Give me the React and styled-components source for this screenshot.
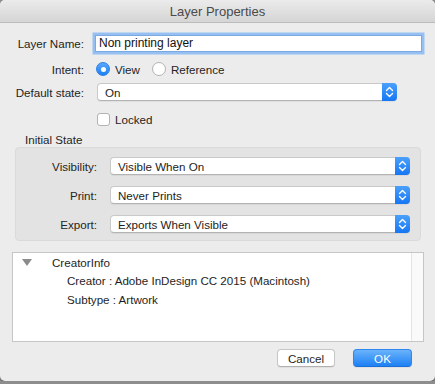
import React from 'react';
import styled, { createGlobalStyle } from 'styled-components';

const GlobalStyle = createGlobalStyle`
  html, body {
    margin: 0;
    padding: 0;
    background: #8d8d8d;
  }
  body {
    font-family: "Liberation Sans", Arial, sans-serif;
    color: #242424;
  }
`;

const Window = styled.div`
  width: 435px;
  height: 381px;
  background: #ececec;
  border-radius: 5px;
  box-shadow: 0 1px 2px rgba(0, 0, 0, 0.4);
  overflow: hidden;
  display: flex;
  flex-direction: column;
`;

const TitleBar = styled.div`
  height: 22px;
  flex: none;
  background: linear-gradient(#ebebeb, #d5d5d5);
  border-bottom: 1px solid #bcbcbc;
  display: flex;
  align-items: center;
  justify-content: center;
  font-size: 13px;
  color: #4a4a4a;
`;

const Body = styled.div`
  flex: 1;
  display: flex;
  flex-direction: column;
  font-size: 11.6px;
`;

const FieldRow = styled.div`
  display: grid;
  grid-template-columns: ${(p) => p.$label}px 1fr;
  column-gap: ${(p) => p.$gap}px;
  align-items: center;
  height: ${(p) => p.$h}px;
  margin-top: ${(p) => p.$mt}px;
`;

const Label = styled.div`
  text-align: right;
  white-space: nowrap;
`;

const TextInput = styled.input`
  box-sizing: border-box;
  width: 327px;
  height: 17px;
  margin-left: -1px;
  border: 1px solid #7ca9e0;
  box-shadow: 0 0 0 2.5px #95c0f1;
  background: #fff;
  padding: 0 3px;
  font: 12px "Liberation Sans", Arial, sans-serif;
  color: #111;
  outline: none;
`;

const RadioGroup = styled.div`
  display: flex;
  align-items: center;
  gap: 12px;
`;

const RadioOption = styled.label`
  display: flex;
  align-items: center;
  gap: 5px;
`;

const RadioDot = styled.span`
  box-sizing: border-box;
  width: 14px;
  height: 14px;
  border-radius: 50%;
  display: flex;
  align-items: center;
  justify-content: center;
  background: ${(p) => (p.$on ? 'linear-gradient(#5aa9fb, #1c7ff5)' : '#fff')};
  border: 1px solid ${(p) => (p.$on ? '#2a80e8' : '#b3b3b3')};
  &::after {
    content: '';
    display: ${(p) => (p.$on ? 'block' : 'none')};
    width: 5px;
    height: 5px;
    border-radius: 50%;
    background: #fff;
  }
`;

const SelectBox = styled.div`
  box-sizing: border-box;
  width: 300px;
  height: 18px;
  display: flex;
  align-items: stretch;
  background: #fff;
  border: 1px solid #c9c9c9;
  border-bottom-color: #b3b3b3;
  border-radius: 4px;
  box-shadow: 0 1px 1px rgba(0, 0, 0, 0.06);
`;

const SelectText = styled.div`
  flex: 1;
  display: flex;
  align-items: center;
  padding-left: 7px;
  color: #222;
`;

const Stepper = styled.div`
  width: 15px;
  margin: -1px -1px -1px 0;
  border-radius: 0 4px 4px 0;
  background: linear-gradient(#4aa0fb, #1677f3);
  display: flex;
  align-items: center;
  justify-content: center;
`;

const CheckRow = styled.label`
  display: flex;
  align-items: center;
  gap: 5px;
`;

const CheckBox = styled.span`
  box-sizing: border-box;
  width: 13px;
  height: 13px;
  border-radius: 3px;
  background: #fff;
  border: 1px solid #b3b3b3;
`;

const SectionTitle = styled.div`
  margin: 6px 0 0 25px;
  line-height: 14px;
`;

const GroupBox = styled.div`
  margin: 0 14px 0 15px;
  height: 94px;
  box-sizing: border-box;
  background: #e3e3e3;
  border: 1px solid #dadada;
  border-radius: 4px;
  padding-top: 9px;
`;

const InfoPanel = styled.div`
  margin: 11px 11px 0 12px;
  height: 90px;
  box-sizing: border-box;
  background: #fff;
  border: 1px solid #c6c6c6;
  display: flex;
`;

const TreeList = styled.div`
  flex: 1;
`;

const ScrollTrack = styled.div`
  width: 11px;
  background: #fafafa;
  border-left: 1px solid #e4e4e4;
`;

const TreeItem = styled.div`
  height: 18.5px;
  display: flex;
  align-items: center;
  padding-left: ${(p) => p.$indent}px;
  color: #1e1e1e;
  white-space: nowrap;
`;

const Disclosure = styled.span`
  width: 0;
  height: 0;
  border-left: 5px solid transparent;
  border-right: 5px solid transparent;
  border-top: 7px solid #8c8c8c;
  margin-right: 20px;
`;

const ButtonBar = styled.div`
  display: flex;
  justify-content: flex-end;
  gap: 18px;
  margin: 7px 23px 0 0;
`;

const Button = styled.button`
  box-sizing: border-box;
  width: ${(p) => p.$w}px;
  height: 18px;
  border-radius: 4px;
  font: 11.6px "Liberation Sans", Arial, sans-serif;
  padding: 0;
  border: 1px solid ${(p) => (p.$primary ? '#2f86ef' : '#c6c6c6')};
  border-bottom-color: ${(p) => (p.$primary ? '#1b6fd8' : '#b0b0b0')};
  background: ${(p) => (p.$primary ? 'linear-gradient(#6ab4fb, #1d80f5)' : '#fff')};
  color: ${(p) => (p.$primary ? '#fff' : '#1e1e1e')};
  box-shadow: 0 1px 1px rgba(0, 0, 0, 0.06);
`;

const Chevrons = () => (
  <svg width="9" height="12" viewBox="0 0 9 12" fill="none">
    <path d="M1.5 4.5 L4.5 1.5 L7.5 4.5" stroke="#fff" strokeWidth="1.4" strokeLinecap="round" strokeLinejoin="round" />
    <path d="M1.5 7.5 L4.5 10.5 L7.5 7.5" stroke="#fff" strokeWidth="1.4" strokeLinecap="round" strokeLinejoin="round" />
  </svg>
);

const Select = ({ value }) => (
  <SelectBox>
    <SelectText>{value}</SelectText>
    <Stepper>
      <Chevrons />
    </Stepper>
  </SelectBox>
);

const states = [
  ['Visibility:', 'Visible When On', 0],
  ['Print:', 'Never Prints', 11],
  ['Export:', 'Exports When Visible', 11],
];

export default function App() {
  return (
    <>
      <GlobalStyle />
      <Window>
        <TitleBar>Layer Properties</TitleBar>
        <Body>
          <FieldRow $label={84} $gap={12} $h={20} $mt={10}>
            <Label>Layer Name:</Label>
            <TextInput defaultValue="Non printing layer" />
          </FieldRow>
          <FieldRow $label={84} $gap={12} $h={20} $mt={6}>
            <Label>Intent:</Label>
            <RadioGroup>
              <RadioOption>
                <RadioDot $on />
                View
              </RadioOption>
              <RadioOption>
                <RadioDot />
                Reference
              </RadioOption>
            </RadioGroup>
          </FieldRow>
          <FieldRow $label={84} $gap={13} $h={18} $mt={4}>
            <Label>Default state:</Label>
            <Select value="On" />
          </FieldRow>
          <FieldRow $label={84} $gap={13} $h={15} $mt={11}>
            <span />
            <CheckRow>
              <CheckBox />
              Locked
            </CheckRow>
          </FieldRow>

          <SectionTitle>Initial State</SectionTitle>
          <GroupBox>
            {states.map(([label, value, mt]) => (
              <FieldRow key={label} $label={81} $gap={13} $h={18} $mt={mt}>
                <Label>{label}</Label>
                <Select value={value} />
              </FieldRow>
            ))}
          </GroupBox>

          <InfoPanel>
            <TreeList>
              <TreeItem $indent={9}>
                <Disclosure />
                CreatorInfo
              </TreeItem>
              <TreeItem $indent={54}>Creator : Adobe InDesign CC 2015 (Macintosh)</TreeItem>
              <TreeItem $indent={54}>Subtype : Artwork</TreeItem>
            </TreeList>
            <ScrollTrack />
          </InfoPanel>

          <ButtonBar>
            <Button $w={58}>Cancel</Button>
            <Button $w={59} $primary>
              OK
            </Button>
          </ButtonBar>
        </Body>
      </Window>
    </>
  );
}
